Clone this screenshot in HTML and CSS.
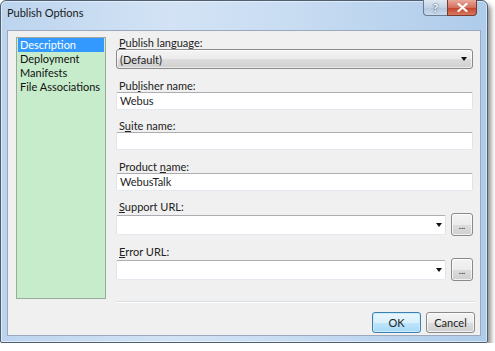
FILE: index.html
```html
<!DOCTYPE html>
<html>
<head>
<meta charset="utf-8">
<link rel="stylesheet" href="styles.css">
</head>
<body>
<div class="window">
  <div class="titlebar">
    <span class="title">Publish Options</span>
    <div class="caption-btns">
      <div class="cbtn help">?</div>
      <div class="cbtn close">
        <svg width="11" height="9" viewBox="0 0 11 9"><path d="M1.5 1 L9.5 8 M9.5 1 L1.5 8" stroke="#fff" stroke-width="2.2" stroke-linecap="round"/></svg>
      </div>
    </div>
  </div>
  <div class="client">
    <div class="main">
      <ul class="nav">
        <li class="sel">Description</li>
        <li>Deployment</li>
        <li>Manifests</li>
        <li>File Associations</li>
      </ul>
      <div class="form">
        <div class="label"><u>P</u>ublish language:</div>
        <div class="combo">
          <span>(Default)</span>
          <span class="arrow"></span>
        </div>
        <div class="label m11">Pub<u>l</u>isher name:</div>
        <div class="input">Webus</div>
        <div class="label m10">S<u>u</u>ite name:</div>
        <div class="input"></div>
        <div class="label m11">Product <u>n</u>ame:</div>
        <div class="input">WebusTalk</div>
        <div class="label m10"><u>S</u>upport URL:</div>
        <div class="row">
          <div class="input ecombo"><span class="arrow"></span></div>
          <div class="btn small">...</div>
        </div>
        <div class="label m10"><u>E</u>rror URL:</div>
        <div class="row">
          <div class="input ecombo"><span class="arrow"></span></div>
          <div class="btn small">...</div>
        </div>
      </div>
    </div>
    <div class="sep"></div>
    <div class="footer">
      <div class="btn default">OK</div>
      <div class="btn">Cancel</div>
    </div>
  </div>
</div>
</body>
</html>
```
FILE: styles.css
```css
html, body { margin: 0; padding: 0; background: #fff; }
body { font-family: "Lato", "Noto Sans", sans-serif; font-size: 11px; color: #1e1e1e; }
.window {
  width: 488px; height: 343px;
  box-sizing: border-box;
  border: 1px solid #4f5f72;
  border-radius: 6px 6px 2px 2px;
  background: linear-gradient(90deg, #bcd4ee 0%, #d3e3f5 35%, #c8dcf2 60%, #aecbea 100%);
  box-shadow: 3px 4px 5px rgba(0,0,0,0.45), inset 0 0 0 1px rgba(255,255,255,0.5);
  display: flex; flex-direction: column;
  padding: 0 6px 6px 6px;
}
.titlebar { height: 29px; display: flex; justify-content: space-between; }
.title { padding-top: 5px; color: #1a1a1a; font-size: 11px; }
.caption-btns { display: flex; margin-top: -1px; margin-right: 4px; align-self: flex-start; }
.cbtn { height: 16px; display: flex; align-items: center; justify-content: center; border: 1px solid #6a7a90; border-top: none; box-sizing: border-box; }
.help { width: 24px; border-radius: 0 0 0 4px; background: linear-gradient(#dfe8f2, #c2d3e6 50%, #b2c6dc 51%, #c9dbee); color: #fff; font-weight: bold; font-size: 12px; text-shadow: 0 0 2px #4a5a70, 0 0 1px #4a5a70; border-right: none; }
.close { width: 30px; border-radius: 0 0 4px 0; background: linear-gradient(#e9a99b, #d5705d 50%, #c3412b 51%, #d77a5f); border-color: #7a3a30; }
.client {
  flex: 1; background: #f0f0f0;
  border: 1px solid #99a8bc;
  display: flex; flex-direction: column;
  padding: 6px 5px 0 8px;
}
.main { display: flex; gap: 10px; }
.nav {
  list-style: none; margin: 0; padding: 0;
  width: 88px; height: 260px;
  background: #c6eccb;
  border: 1px solid #9aaa9e;
}
.nav li { height: 14px; line-height: 14px; padding-left: 3px; white-space: nowrap; color: #111; }
.nav li.sel { background: #3399ff; color: #fff; margin: 0 1px; padding-left: 2px; }
.form { flex: 1; display: flex; flex-direction: column; padding-right: 2px; }
.label { height: 12px; line-height: 12px; padding-left: 3px; color: #222; }
.label u { text-decoration: underline; text-underline-offset: 1px; }
.m10 { margin-top: 10px; }
.m11 { margin-top: 11px; }
.combo {
  height: 20px; box-sizing: border-box;
  border: 1px solid #8a8a8a; border-radius: 3px;
  background: linear-gradient(#f4f4f4, #ebebeb 50%, #dddddd 51%, #cfcfcf);
  display: flex; align-items: center; justify-content: space-between;
  padding: 0 5px 0 3px;
  box-shadow: inset 0 0 0 1px rgba(255,255,255,0.6);
}
.arrow { width: 0; height: 0; border-left: 3.5px solid transparent; border-right: 3.5px solid transparent; border-top: 4px solid #111; }
.input {
  height: 18px; box-sizing: border-box;
  background: #fff;
  border: 1px solid #e2e3ea; border-top-color: #abadb3; border-bottom-color: #e3e9ef;
  border-radius: 2px;
  padding: 0 3px; line-height: 16px;
}
.row { display: flex; align-items: center; gap: 5px; height: 23px; }
.ecombo { flex: 1; height: 20px; display: flex; align-items: center; justify-content: flex-end; padding-right: 3px; }
.btn {
  box-sizing: border-box;
  border: 1px solid #8a8a8a; border-radius: 3px;
  background: linear-gradient(#f4f4f4, #ebebeb 50%, #dddddd 51%, #cfcfcf);
  box-shadow: inset 0 0 0 1px rgba(255,255,255,0.7);
  display: flex; align-items: center; justify-content: center;
  width: 49px; height: 21px; color: #222;
}
.btn.small { width: 22px; height: 23px; font-size: 9px; line-height: 8px; padding-top: 3px; }
.btn.default { border-color: #3c7fb1; background: linear-gradient(#eaf6fd, #d9f0fc 50%, #bee6fd 51%, #a7d9f5); box-shadow: inset 0 0 0 1px #c9eafb; }
.sep { height: 0; border-top: 1px solid #d5dfe5; border-bottom: 1px solid #fff; margin: 2px 0 0 100px; width: 359px; }
.footer { display: flex; justify-content: flex-end; gap: 5px; padding-top: 9px; }
```
